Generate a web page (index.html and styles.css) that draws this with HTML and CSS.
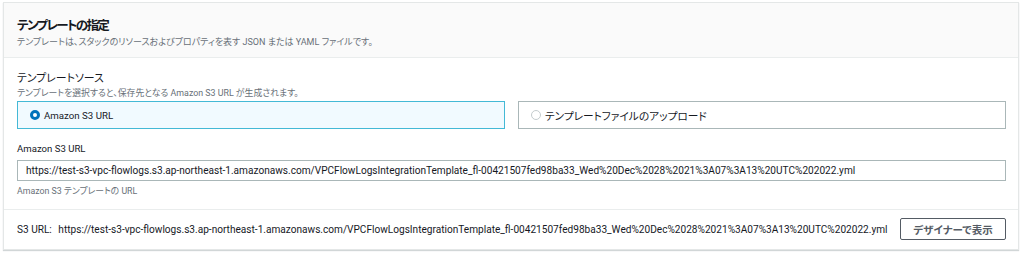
FILE: index.html
```html
<!DOCTYPE html>
<html lang="ja">
  <head>
    <meta charset="utf-8" />
    <title>テンプレートの指定</title>
    <link rel="stylesheet" href="styles.css">
  </head>
  <body>
    <!-- Template specification panel -->
    <div class="panel">
      <div class="panel-header">
        <h2 class="panel-title">テンプレートの指定</h2>
        <p class="panel-desc">テンプレートは、スタックのリソースおよびプロパティを表す JSON または YAML ファイルです。</p>
      </div>

      <div class="panel-body">
        <!-- Template source -->
        <div class="field">
          <div class="field-label">テンプレートソース</div>
          <div class="field-desc">テンプレートを選択すると、保存先となる Amazon S3 URL が生成されます。</div>
          <div class="tiles">
            <label class="tile tile-selected">
              <span class="radio radio-checked"></span>
              <span class="tile-text tile-text-en">Amazon S3 URL</span>
            </label>
            <label class="tile">
              <span class="radio"></span>
              <span class="tile-text">テンプレートファイルのアップロード</span>
            </label>
          </div>
        </div>

        <!-- S3 URL input -->
        <div class="field field-url">
          <div class="field-label field-label-en">Amazon S3 URL</div>
          <div class="input">https://test-s3-vpc-flowlogs.s3.ap-northeast-1.amazonaws.com/VPCFlowLogsIntegrationTemplate_fl-00421507fed98ba33_Wed%20Dec%2028%2021%3A07%3A13%20UTC%202022.yml</div>
          <div class="field-hint">Amazon S3 テンプレートの URL</div>
        </div>
      </div>

      <!-- Footer -->
      <div class="panel-footer">
        <div class="footer-url">
          <span class="footer-key">S3 URL:</span>
          <span>https://test-s3-vpc-flowlogs.s3.ap-northeast-1.amazonaws.com/VPCFlowLogsIntegrationTemplate_fl-00421507fed98ba33_Wed%20Dec%2028%2021%3A07%3A13%20UTC%202022.yml</span>
        </div>
        <button class="btn">デザイナーで表示</button>
      </div>
    </div>
  </body>
</html>
```

FILE: styles.css
```css
/* Page */
body {
  margin: 0;
  padding: 2px 5px 2px 3px;
  background: #ffffff;
  font-family: Roboto, "Noto Sans CJK JP", sans-serif;
  font-feature-settings: "palt";
  color: #16191f;
}

/* Panel container */
.panel {
  border: 1px solid #e4e7e7;
  box-shadow: 0 1px 1px rgba(0, 28, 36, 0.18);
  background: #ffffff;
}

.panel-header {
  background: #fafafa;
  border-bottom: 1px solid #eaeded;
  padding: 12px 13px 9px;
}

.panel-title {
  margin: 0;
  font-size: 12.5px;
  font-weight: 700;
  line-height: 21px;
  letter-spacing: -1.6px;
}

.panel-desc {
  margin: 0;
  font-size: 9px;
  line-height: 12px;
  color: #687078;
}

/* Body */
.panel-body {
  padding: 14px 12px 12px 13px;
}

.field-label {
  font-size: 10.9px;
  line-height: 14px;
}

.field-label-en {
  font-size: 9.6px;
}

.field-desc {
  font-size: 8.85px;
  line-height: 14px;
  color: #687078;
}

.field-hint {
  margin-top: 4px;
  font-size: 8.8px;
  line-height: 12px;
  color: #687078;
}

/* Radio tiles */
.tiles {
  display: flex;
  gap: 13px;
  margin-top: 1px;
}

.tile {
  flex: 1;
  display: flex;
  align-items: center;
  gap: 4px;
  height: 26px;
  padding: 0 12px;
  border: 1px solid #aab7b8;
  font-size: 10.7px;
}

.tile-text-en {
  font-size: 9.7px;
}

.tile-selected {
  background: #f1faff;
  border-color: #44b9d6;
}

.radio {
  width: 8px;
  height: 8px;
  border: 1px solid #c4ccce;
  border-radius: 50%;
  background: #ffffff;
}

.radio-checked {
  width: 4px;
  height: 4px;
  border: 3px solid #0073bb;
}

/* URL input */
.field-url {
  margin-top: 13px;
}

.input {
  margin-top: 4px;
  height: 19px;
  line-height: 19px;
  padding: 0 8px;
  border: 1px solid #aab7b8;
  font-size: 10.1px;
  white-space: nowrap;
  overflow: hidden;
}

/* Footer */
.panel-footer {
  display: flex;
  align-items: center;
  gap: 10px;
  border-top: 1px solid #eaeded;
  padding: 8px 12px 9px 13px;
  font-size: 10.1px;
  white-space: nowrap;
}

.footer-url {
  flex: 1;
  min-width: 0;
  overflow: hidden;
}

.footer-key {
  margin-right: 4px;
}

.btn {
  flex-shrink: 0;
  height: 22px;
  width: 106px;
  border: 1px solid #545b64;
  border-radius: 2px;
  background: #ffffff;
  color: #545b64;
  font-family: Roboto, "Noto Sans CJK JP", sans-serif;
  font-feature-settings: "palt";
  font-size: 10.5px;
  font-weight: 700;
}
```
